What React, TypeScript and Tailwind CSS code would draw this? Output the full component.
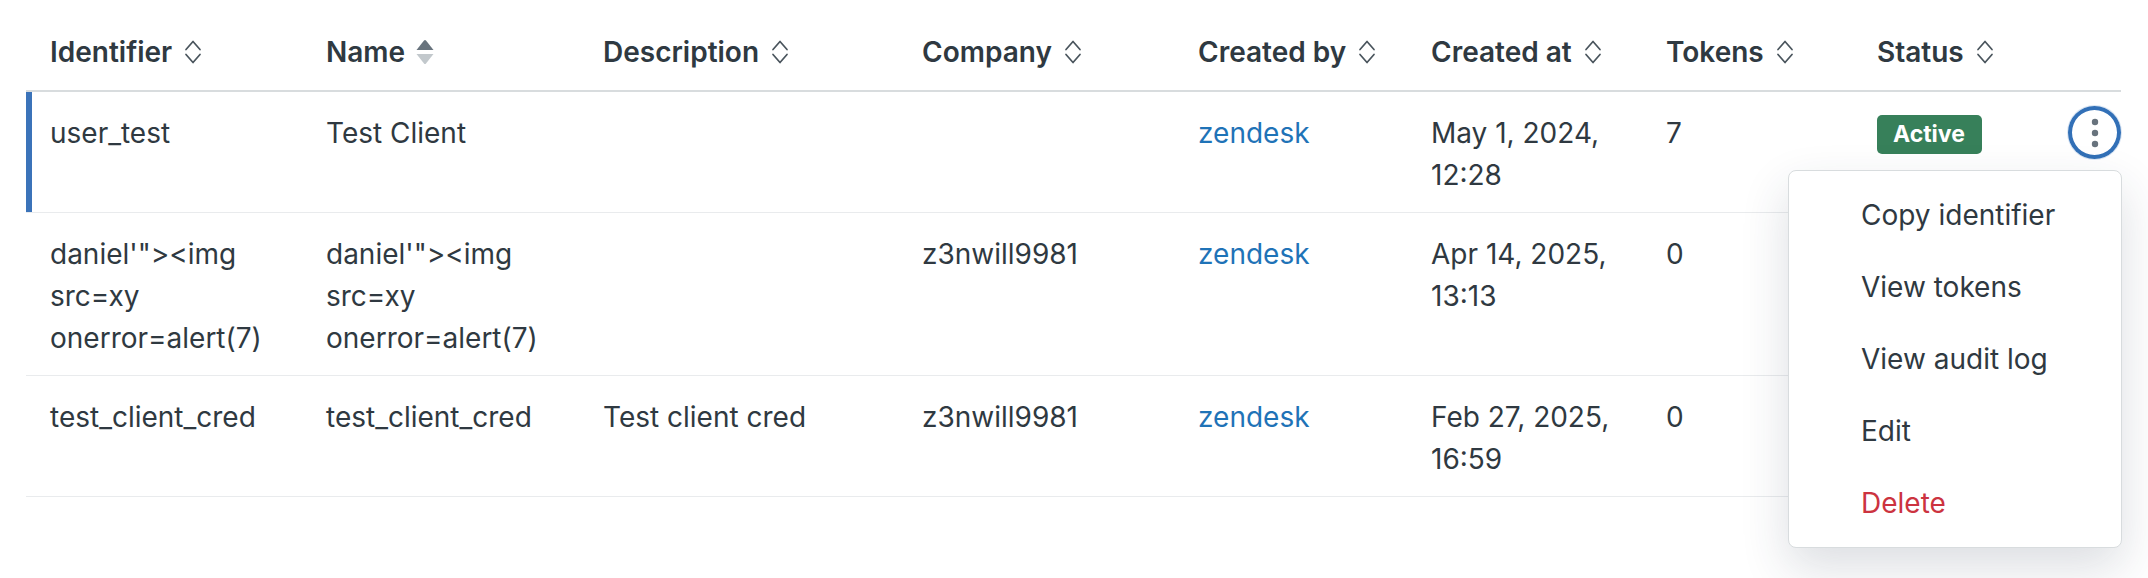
import React from 'react'

interface Client {
  identifier: string
  name: string
  description: string
  company: string
  createdBy: string
  createdAt: string
  tokens: number
  active: boolean
}

const CLIENTS: Client[] = [
  { identifier: 'user_test', name: 'Test Client', description: '', company: '', createdBy: 'zendesk', createdAt: 'May 1, 2024, 12:28', tokens: 7, active: true },
  { identifier: `daniel'"><img src=xy onerror=alert(7)`, name: `daniel'"><img src=xy onerror=alert(7)`, description: '', company: 'z3nwill9981', createdBy: 'zendesk', createdAt: 'Apr 14, 2025, 13:13', tokens: 0, active: false },
  { identifier: 'test_client_cred', name: 'test_client_cred', description: 'Test client cred', company: 'z3nwill9981', createdBy: 'zendesk', createdAt: 'Feb 27, 2025, 16:59', tokens: 0, active: false },
]

const HEADERS = ['Identifier', 'Name', 'Description', 'Company', 'Created by', 'Created at', 'Tokens', 'Status']

const MENU = ['Copy identifier', 'View tokens', 'View audit log', 'Edit']

function SortIcon() {
  return (
    <svg width="18" height="28" viewBox="0 0 18 28" fill="none" className="ml-[12px] shrink-0">
      <path d="M2 11.5 L9 3.5 L16 11.5" stroke="#49545c" strokeWidth="1.7" strokeLinejoin="round" strokeLinecap="round" />
      <path d="M2 16.5 L9 24.5 L16 16.5" stroke="#49545c" strokeWidth="1.7" strokeLinejoin="round" strokeLinecap="round" />
    </svg>
  )
}

function SortedIcon() {
  return (
    <svg width="18" height="28" viewBox="0 0 18 28" className="ml-[11px] shrink-0">
      <path d="M0.5 12 L8 2.5 Q9 1.5 10 2.5 L17.5 12 Z" fill="#68737d" />
      <path d="M0.5 16 L17.5 16 L10 25.5 Q9 26.5 8 25.5 Z" fill="#c2c8cc" />
    </svg>
  )
}

const cell = 'align-top pl-[24px] pr-[12px] pt-[20px] pb-[16px] border-b border-[#e9ebed]'

export default function App() {
  return (
    <div className="w-[2148px] h-[578px] overflow-hidden bg-white text-[#2f3941] font-['Inter','Liberation_Sans',Arial,sans-serif] text-[28px] leading-[42px]">
      <div className="relative mx-[26px]">
        <table className="w-[2095px] table-fixed border-collapse">
          <colgroup>
            <col className="w-[276px]" />
            <col className="w-[277px]" />
            <col className="w-[319px]" />
            <col className="w-[276px]" />
            <col className="w-[233px]" />
            <col className="w-[235px]" />
            <col className="w-[211px]" />
            <col className="w-[190px]" />
            <col className="w-[78px]" />
          </colgroup>
          <thead>
            <tr>
              {HEADERS.map(h => (
                <th key={h} className="text-left font-semibold pl-[24px] pt-[31px] pb-[17px] border-b-2 border-[#d8dcde]">
                  <span className="inline-flex items-center whitespace-nowrap">
                    {h}
                    {h === 'Name' ? <SortedIcon /> : <SortIcon />}
                  </span>
                </th>
              ))}
              <th className="border-b-2 border-[#d8dcde]" />
            </tr>
          </thead>
          <tbody>
            {CLIENTS.map((c, i) => (
              <tr key={i}>
                <td className={`${cell} ${i === 0 ? 'shadow-[inset_6px_0_0_#3b73b9]' : ''}`}>{c.identifier}</td>
                <td className={cell}>{c.name}</td>
                <td className={cell}>{c.description}</td>
                <td className={cell}>{c.company}</td>
                <td className={cell}>
                  <a className="text-[#1f73b7]">{c.createdBy}</a>
                </td>
                <td className={cell}>{c.createdAt}</td>
                <td className={cell}>{c.tokens}</td>
                <td className={cell}>
                  {c.active && (
                    <span className="inline-flex items-center align-top mt-[3px] h-[39px] pl-[16px] pr-[17px] rounded-[5px] bg-[#37805a] text-white font-bold text-[23px] leading-none">
                      Active
                    </span>
                  )}
                </td>
                <td className="align-top pt-[14px] border-b border-[#e9ebed]">
                  {i === 0 && (
                    <button className="ml-auto flex items-center justify-center w-[53px] h-[53px] rounded-full bg-white shadow-[inset_0_0_0_4px_#3270b7,0_0_0_1px_#dbe6f3]">
                      <svg width="8" height="30" viewBox="0 0 8 30">
                        <circle cx="4" cy="4" r="3.2" fill="#68737d" />
                        <circle cx="4" cy="15" r="3.2" fill="#68737d" />
                        <circle cx="4" cy="26" r="3.2" fill="#68737d" />
                      </svg>
                    </button>
                  )}
                </td>
              </tr>
            ))}
          </tbody>
        </table>

        <div className="absolute right-0 top-[170px] w-[334px] bg-white border border-[#d8dcde] rounded-[8px] py-[8px] shadow-[0_20px_48px_rgba(36,52,73,0.16)]">
          {MENU.map(m => (
            <div key={m} className="h-[72px] flex items-center pl-[72px]">{m}</div>
          ))}
          <div className="h-[72px] flex items-center pl-[72px] text-[#cc3340]">Delete</div>
        </div>
      </div>
    </div>
  )
}
